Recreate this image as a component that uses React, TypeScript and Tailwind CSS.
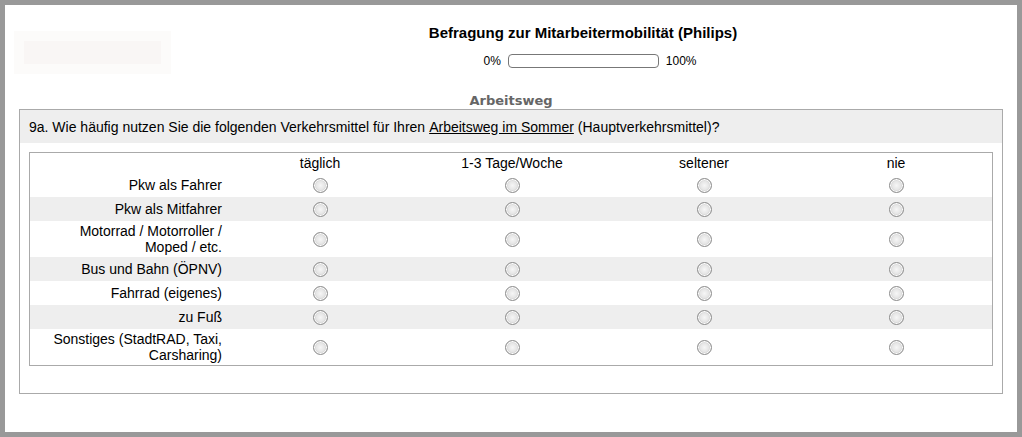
const columns = ['täglich', '1-3 Tage/Woche', 'seltener', 'nie'];

const rows = [
  { label: 'Pkw als Fahrer' },
  { label: 'Pkw als Mitfahrer' },
  { label: 'Motorrad / Motorroller / Moped / etc.' },
  { label: 'Bus und Bahn (ÖPNV)' },
  { label: 'Fahrrad (eigenes)' },
  { label: 'zu Fuß' },
  { label: 'Sonstiges (StadtRAD, Taxi, Carsharing)' },
];

function Radio() {
  return (
    <span className="inline-block w-[15px] h-[15px] rounded-full border border-[#8c8c8c] bg-[radial-gradient(circle_at_50%_50%,#f6f6f6_0%,#e6e6e6_45%,#c4c4c4_75%)] shadow-[inset_0_0_0_1px_#ffffff]" />
  );
}

export default function App() {
  return (
    <div className="h-[437px] border-[5px] border-[#999] bg-white font-['Liberation_Sans',Arial,sans-serif] text-[14px] text-black">
      {/* Header */}
      <div className="flex pt-[26px] pr-[22px]">
        <div className="ml-[9px] w-[157px] h-[43px] bg-[#fcfbfa] p-[10px]">
          <div className="h-full bg-[#f9f6f5]" />
        </div>
        <div className="flex-1 flex flex-col items-center">
          <div className="text-[15px] font-bold leading-4 -mt-[6px]">
            Befragung zur Mitarbeitermobilität (Philips)
          </div>
          <div className="flex items-center gap-[7px] mt-[11px] ml-[14px] text-[12px]">
            <span>0%</span>
            <div className="w-[151px] h-[14px] rounded-[4px] border border-[#777] bg-white" />
            <span>100%</span>
          </div>
        </div>
      </div>

      <div className="text-center mt-[19px] font-['DejaVu_Sans',Verdana,sans-serif] text-[13px] font-bold leading-4 text-[#666]">
        Arbeitsweg
      </div>

      {/* Question */}
      <div className="mx-[14px] h-[285px] border border-[#aaa]">
        <div className="h-[33px] bg-[#eee] flex items-center pl-[9px] pt-[2px]">
          9a. Wie häufig nutzen Sie die folgenden Verkehrsmittel für Ihren{' '}
          <span className="underline mx-[4px]">Arbeitsweg im Sommer</span>
          (Hauptverkehrsmittel)?
        </div>
        <div className="mx-[9px] mt-[9px] border border-[#aaa]">
          <div className="grid grid-cols-[194px_1fr_1fr_1fr_1fr] leading-4">
            <div />
            {columns.map((c) => (
              <div key={c} className="text-center pt-[2px] pb-[2px]">{c}</div>
            ))}
          </div>
          {rows.map((r, i) => (
            <div
              key={r.label}
              className={`grid grid-cols-[194px_1fr_1fr_1fr_1fr] items-center min-h-[24px] leading-4 ${
                i % 2 === 1 ? 'bg-[#eee]' : 'bg-white'
              }`}
            >
              <div className="text-right py-[2px] pr-[2px] pl-4">{r.label}</div>
              {columns.map((c) => (
                <div key={c} className="flex justify-center">
                  <Radio />
                </div>
              ))}
            </div>
          ))}
        </div>
      </div>
    </div>
  );
}
